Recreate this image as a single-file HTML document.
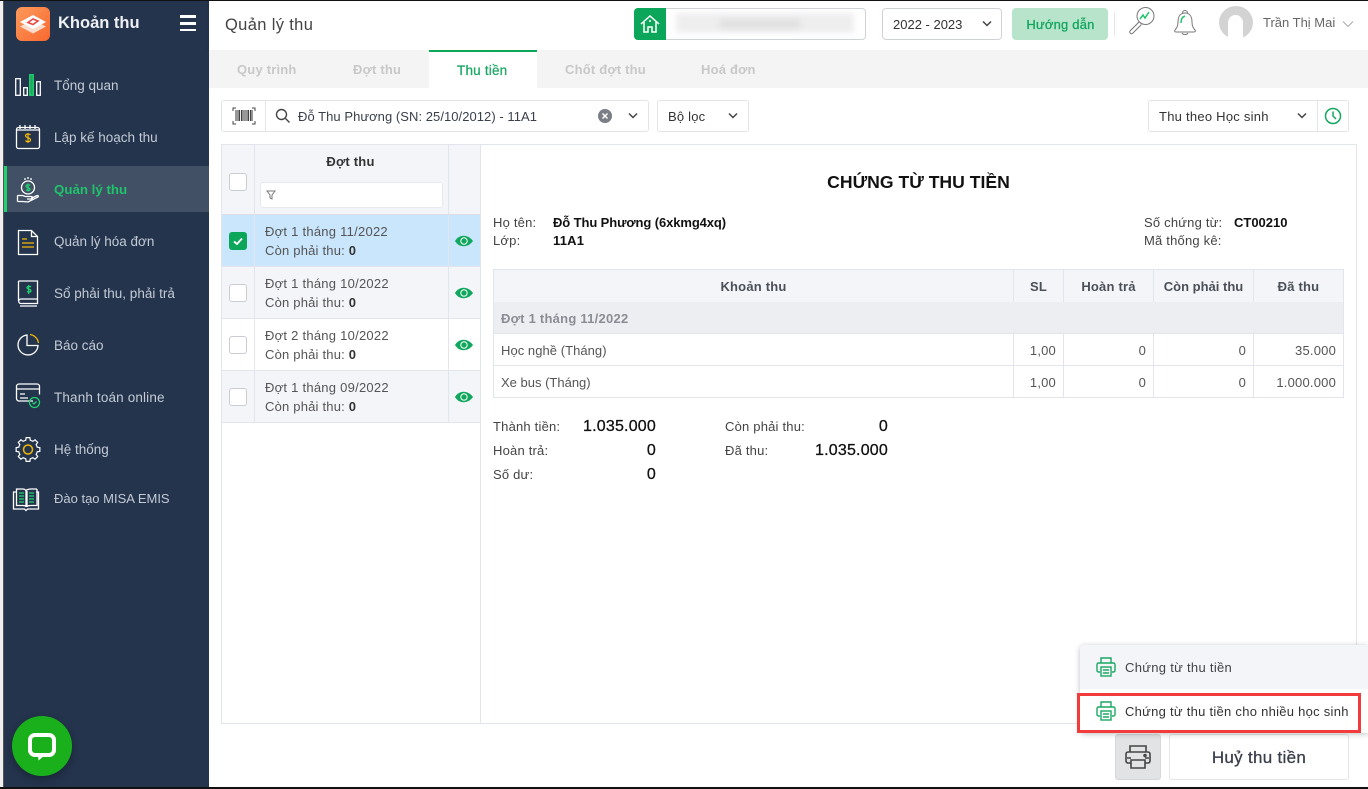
<!DOCTYPE html>
<html><head><meta charset="utf-8"><style>
*{box-sizing:border-box}
html,body{margin:0;padding:0;width:1368px;height:789px;overflow:hidden;background:#fff}
body{position:relative;font-family:"Liberation Sans","Noto Sans CJK SC",sans-serif;font-size:13px;color:#3a3f4b}
div,svg,span.a{position:absolute}
.t{white-space:nowrap;line-height:18px;height:18px;letter-spacing:.2px;margin-top:1px}
.z{margin-top:0}
.r{text-align:right}
.c{text-align:center}
.n{color:#c3cad4;font-size:13.5px;letter-spacing:0}
.b{font-weight:bold}
.k{color:#111}
.box{border:1px solid #e2e4ea;border-radius:3px;background:#fff}
.tb{color:#c8c8c8;font-weight:bold;font-size:13px}
.cb{width:18px;height:18px;border:1px solid #c9ccd3;border-radius:3px;background:#fff}
.l{background:#e3e5ee}
svg{overflow:visible}
</style></head><body>
<div style="left:0;top:0;width:3px;height:789px;background:#efefef"></div>
<div style="left:3px;top:0;width:1px;height:789px;background:#555"></div>
<div style="left:4px;top:0;width:205px;height:789px;background:#24344d"></div>
<div style="left:4px;top:166px;width:205px;height:46px;background:#425066"></div>
<div style="left:4px;top:166px;width:3px;height:46px;background:#1fd06c"></div>

<!-- logo -->
<div style="left:16px;top:7px;width:34px;height:34px;border-radius:6px;background:linear-gradient(135deg,#fd9a5c,#f8682f)"></div>
<svg style="left:16px;top:7px" width="34" height="34"><path d="M17 13l13 6.500-13 7-13-7z" fill="#f9dccb"/><path d="M17 8l13 7-13 7-13-7z" fill="#fff"/><path d="M12 15.500l5-3.500 5 2-5 3.500z" fill="none" stroke="#e8473f" stroke-width="1.600"/></svg>
<div class="t b z" style="left:58px;top:14px;color:#eef0f3;font-size:16.5px;letter-spacing:0">Khoản thu</div>
<div style="left:180px;top:15px;width:16px;height:2.500px;background:#fff"></div>
<div style="left:180px;top:22px;width:16px;height:2.500px;background:#fff"></div>
<div style="left:180px;top:28.500px;width:16px;height:2.500px;background:#fff"></div>

<!-- nav -->
<div class="t n" style="left:54px;top:76px">Tổng quan</div>
<div class="t n" style="left:54px;top:128px">Lập kế hoạch thu</div>
<div class="t b" style="left:54px;top:180px;color:#1fc46a;font-size:13.3px;letter-spacing:0">Quản lý thu</div>
<div class="t n" style="left:54px;top:232px">Quản lý hóa đơn</div>
<div class="t n" style="left:54px;top:284px">Sổ phải thu, phải trả</div>
<div class="t n" style="left:54px;top:336px">Báo cáo</div>
<div class="t n" style="left:54px;top:388px;letter-spacing:.15px">Thanh toán online</div>
<div class="t n" style="left:54px;top:440px">Hệ thống</div>
<div class="t n" style="left:54px;top:489px;font-size:13px">Đào tạo MISA EMIS</div>

<svg style="left:0;top:0" width="209" height="520" fill="none" stroke="#fff" stroke-width="1.300">
<rect x="15.7" y="78.7" width="4.600" height="16.600"/><rect x="23.7" y="87.700" width="3.600" height="7.600"/><rect x="29.7" y="74.700" width="3.600" height="20.600" stroke="#1fd06c" fill="#1fa85c"/><rect x="36.7" y="81.700" width="3.600" height="13.600"/>
<rect x="16.5" y="127.500" width="23" height="21" rx="2"/><path d="M20 125v4M25 125v4M30 125v4M35 125v4M17 130h22"/><path d="M30.500 135c-1-1.500-5-1.500-5 .8s5 1.600 5 4-4 2.300-5 .7M28 133v10" stroke="#f2b705" stroke-width="1.200"/>
<circle cx="28" cy="187.500" r="6.500"/><path d="M30 185.500c-1-1-4-1-4 .7s4 1.300 4 3-3 1.600-4 .6M28 183.500v8" stroke="#1fd06c"/><path d="M28 177v2M25 178v2M31 178v2"/><path d="M17.500 195.500h5l3 1h5.500c2 0 2 2.500 0 2.500h-4M17.500 201.500v-6M17.500 201.500h5l5.500 .5 10-5c1-1 0-2-2-1l-5 2.500"/>
<path d="M18.500 230.500h13l6 6v18h-19z M31.500 230.500v6h6"/><path d="M22 239h5M22 243h12M22 247h12" stroke="#f2b705"/>
<path d="M18.500 281h19v22.500h-16.500c-3 0-3-4.500 0-4.500h16.500M18.500 281v20M20 306h17"/><path d="M31 287c-1-1-4-1-4 .7s4 1.300 4 3-3 1.600-4 .6M28.700 285v9" stroke="#1fd06c"/>
<path d="M27 335a10 10 0 1 0 11 10.500h-11z"/><path d="M30 334.500a10 10 0 0 1 8.500 8.500" stroke="#f2b705"/>
<path d="M33 401h-14a2.500 2.500 0 0 1-2.500-2.500v-12a2.500 2.500 0 0 1 2.500-2.500h18a2.500 2.500 0 0 1 2.500 2.500v8M17 389h22M20 394h5M20 398h8"/><circle cx="34.500" cy="402.500" r="5" stroke="#1fd06c"/><path d="M32.500 402.500l1.500 1.500 2.500-2.500" stroke="#1fd06c"/>
<g transform="translate(28 449.500)" stroke-width="1.200">
<path d="M-3.640-8.780L-2.300-9.220L-1.880-11.850H1.880L2.300-9.220L3.640-8.780"/>
<path transform="rotate(45)" d="M-3.640-8.780L-2.300-9.220L-1.880-11.850H1.880L2.300-9.220L3.640-8.780"/>
<path transform="rotate(90)" d="M-3.640-8.780L-2.300-9.220L-1.880-11.850H1.880L2.300-9.220L3.640-8.780"/>
<path transform="rotate(135)" d="M-3.640-8.780L-2.300-9.220L-1.880-11.850H1.880L2.300-9.220L3.640-8.780"/>
<path transform="rotate(180)" d="M-3.640-8.780L-2.300-9.220L-1.880-11.850H1.880L2.300-9.220L3.640-8.780"/>
<path transform="rotate(225)" d="M-3.640-8.780L-2.300-9.220L-1.880-11.850H1.880L2.300-9.220L3.640-8.780"/>
<path transform="rotate(270)" d="M-3.640-8.780L-2.300-9.220L-1.880-11.850H1.880L2.300-9.220L3.640-8.780"/>
<path transform="rotate(315)" d="M-3.640-8.780L-2.300-9.220L-1.880-11.850H1.880L2.300-9.220L3.640-8.780"/>
<circle r="4.500" stroke="#f2b705" stroke-width="1.500"/></g>
<path d="M16 492h-2.500v17h11l1.500 1.500 1.500-1.500h11v-17H36M16.500 489h6c1.800 0 3.500.8 3.500 2v16c0-1-1.700-1.500-3.500-1.500h-6zM37 489h-6c-1.800 0-5 .8-5 2M27 491v16c0-1 2-1.500 4-1.500h6V489"/><path d="M19 493h5M19 496h5M19 499h5M19 502h5M29 493h5M29 496h5M29 499h5M29 502h5" stroke="#1fd06c"/>
</svg>

<!-- chat -->
<div style="left:12px;top:716px;width:60px;height:60px;border-radius:50%;background:#1ab01c;box-shadow:0 3px 8px rgba(0,0,0,.3)"></div>
<svg style="left:12px;top:716px" width="60" height="60"><path d="M23 19h14a5 5 0 0 1 5 5v10a5 5 0 0 1-5 5H23a5 5 0 0 1-5-5V24a5 5 0 0 1 5-5z" fill="none" stroke="#fff" stroke-width="4"/><path d="M26 39h7l-6.500 5.500z" fill="#fff"/></svg>

<!-- header -->
<div style="left:209px;top:0;width:1159px;height:50px;background:#fff;box-shadow:0 1px 3px rgba(0,0,0,.1)"></div>
<div style="left:0;top:0;width:1368px;height:1px;background:#111"></div>
<div class="t" style="left:225px;top:15px;font-size:16.500px;color:#444;letter-spacing:.35px">Quản lý thu</div>
<div style="left:634px;top:8px;width:232px;height:32px;border:1px solid #cfd2d6;border-radius:4px;background:#fff"></div>
<div style="left:634px;top:8px;width:32px;height:32px;background:#0ca65a;border-radius:4px 0 0 4px"></div>
<svg style="left:634px;top:8px" width="32" height="32" fill="none" stroke="#fff" stroke-width="1.500"><path d="M7 16l9-8 9 8M10 14v10h4v-5h4v5h4V14"/><path d="M15 13h2"/></svg>
<div style="left:676px;top:13px;width:178px;height:20px;background:#eeeeee;filter:blur(3px)"></div>
<div style="left:720px;top:20px;width:80px;height:8px;background:#dfdfdf;filter:blur(3px)"></div>
<div style="left:882px;top:8px;width:120px;height:32px;border:1px solid #cfd2d6;border-radius:4px"></div>
<div class="t" style="left:893px;top:15px;color:#333;letter-spacing:0">2022 - 2023</div>
<svg style="left:981px;top:20px" width="12" height="8" fill="none" stroke="#444" stroke-width="1.500"><path d="M2 1.500l4 4 4-4"/></svg>
<div style="left:1012px;top:8px;width:96px;height:32px;background:#b8e4cb;border-radius:4px"></div>
<div class="t b c" style="top:15px;width:83px;left:1019px;color:#12a75f;font-weight:normal;-webkit-text-stroke:.3px #12a75f">Hướng dẫn</div>
<div style="left:1114px;top:12px;width:1px;height:24px;background:#e5e5e5"></div>
<svg style="left:1120px;top:0" width="130" height="50" fill="none" stroke="#777" stroke-width="1"><circle cx="25.500" cy="16" r="8.500"/><path d="M19 22l-9 9c-1 1.500 1 3.500 2.500 2.500l9-9"/><path d="M20 19l3-4 2 3 4-6" stroke="#1fc46a" stroke-width="1.500"/><path d="M65 13c-5 0-7 4-7 9 0 4-1 6-3 8-1 1 0 2 1 2h18c1 0 2-1 1-2-2-2-3-4-3-8 0-5-2-9-7-9zM62.500 13a2.500 2.500 0 0 1 5 0M62 33c1 2 5 2 6 0"/><path d="M61 23c0-4 1-6 4-7" stroke="#1fc46a" stroke-width="1.500"/></svg>
<div style="left:1219px;top:6px;width:34px;height:33px;border-radius:50%;background:#d3d3d3"></div>
<div style="left:1228px;top:15px;width:15px;height:25px;border-radius:8px 8px 0 0;background:#fff"></div>
<div class="t z" style="left:1263px;top:14px;color:#666;font-size:13px;letter-spacing:0">Trần Thị Mai</div>
<svg style="left:1342px;top:20px" width="12" height="8" fill="none" stroke="#aaa"><path d="M1 1.500l5 5 5-5"/></svg>

<!-- tabs -->
<div style="left:209px;top:50px;width:1159px;height:38px;background:#f4f4f4"></div>
<div style="left:429px;top:50px;width:108px;height:38px;background:#fff;border-top:2px solid #0ca65a"></div>
<div class="t tb z" style="left:237px;top:61px">Quy trình</div>
<div class="t tb z" style="left:353px;top:61px">Đợt thu</div>
<div class="t" style="left:457px;top:61px;color:#1aa863;-webkit-text-stroke:.25px #1aa863;font-size:13.500px">Thu tiền</div>
<div class="t tb z" style="left:565px;top:61px">Chốt đợt thu</div>
<div class="t tb z" style="left:701px;top:61px">Hoá đơn</div>

<!-- filter -->
<div class="box" style="left:221px;top:100px;width:428px;height:32px"></div>
<div class="l" style="left:265px;top:101px;width:1px;height:30px"></div>
<svg style="left:232px;top:107px" width="24" height="18" fill="none" stroke="#444"><path d="M1 4V1h3M20 1h3v3M1 14v3h3M20 17h3v-3"/><path d="M4 3v11M6 3v11M7.500 3v11M9.500 3v11M11 3v11M13 3v11M15 3v11M16.500 3v11M18.500 3v11M20 3v11" stroke-width="1.100"/></svg>
<svg style="left:275px;top:108px" width="16" height="16" fill="none" stroke="#444" stroke-width="1.400"><circle cx="6.500" cy="6.500" r="5"/><path d="M10.500 10.500l4 4"/></svg>
<div class="t" style="left:298px;top:107px;color:#3a3f4b;letter-spacing:.05px">Đỗ Thu Phương (SN: 25/10/2012) - 11A1</div>
<div style="left:598px;top:109px;width:14px;height:14px;border-radius:50%;background:#7a7e86"></div>
<svg style="left:598px;top:109px" width="14" height="14" stroke="#fff" stroke-width="1.500"><path d="M4.500 4.500l5 5M9.500 4.500l-5 5"/></svg>
<svg style="left:627px;top:112px" width="12" height="8" fill="none" stroke="#444" stroke-width="1.500"><path d="M2 1.500l4 4 4-4"/></svg>
<div class="box" style="left:657px;top:100px;width:92px;height:32px"></div>
<div class="t" style="left:668px;top:107px;color:#333">Bộ lọc</div>
<svg style="left:727px;top:112px" width="12" height="8" fill="none" stroke="#444" stroke-width="1.500"><path d="M2 1.500l4 4 4-4"/></svg>
<div class="box" style="left:1148px;top:100px;width:201px;height:32px"></div>
<div class="l" style="left:1317px;top:101px;width:1px;height:30px"></div>
<div class="t" style="left:1159px;top:107px;color:#333;letter-spacing:.25px">Thu theo Học sinh</div>
<svg style="left:1296px;top:112px" width="12" height="8" fill="none" stroke="#444" stroke-width="1.500"><path d="M2 1.500l4 4 4-4"/></svg>
<svg style="left:1324px;top:107px" width="18" height="18" fill="none" stroke="#12a75f" stroke-width="1.500"><circle cx="9" cy="9" r="7.500"/><path d="M9 4.500V9l3 3"/></svg>

<!-- main panel -->
<div style="left:221px;top:144px;width:1136px;height:580px;border:1px solid #e3e5ee;background:#fff"></div>
<div style="left:222px;top:145px;width:258px;height:69px;background:#f4f5f9"></div>
<div style="left:222px;top:214px;width:258px;height:1px;background:#dcdee6"></div>
<div class="l" style="left:480px;top:145px;width:1px;height:578px"></div>
<div class="cb" style="left:229px;top:173px"></div>
<div class="t b c" style="left:254px;top:152px;width:193px;color:#333">Đợt thu</div>
<div style="left:260px;top:182px;width:183px;height:26px;background:#fff;border:1px solid #e8e9ee;border-radius:3px"></div>
<svg style="left:266px;top:190px" width="10" height="10" fill="none" stroke="#777"><path d="M1 1h8L6 5v4L4 8V5z"/></svg>

<!-- rows -->
<div style="left:222px;top:215px;width:258px;height:52px;background:#c9e6fc"></div>
<div style="left:222px;top:267px;width:258px;height:52px;background:#f4f5f9"></div>
<div style="left:222px;top:371px;width:258px;height:52px;background:#f4f5f9"></div>
<div class="l" style="left:222px;top:266px;width:258px;height:1px"></div>
<div class="l" style="left:222px;top:318px;width:258px;height:1px"></div>
<div class="l" style="left:222px;top:370px;width:258px;height:1px"></div>
<div class="l" style="left:222px;top:422px;width:258px;height:1px"></div>
<div class="l" style="left:254px;top:145px;width:1px;height:278px"></div>
<div class="l" style="left:448px;top:145px;width:1px;height:278px"></div>

<div style="left:229px;top:232px;width:18px;height:18px;border-radius:3px;background:#0ca65a"></div>
<svg style="left:229px;top:232px" width="18" height="18" fill="none" stroke="#fff" stroke-width="1.800"><path d="M5 9.500l3 2.500 5-5.500"/></svg>
<div class="cb" style="left:229px;top:284px"></div>
<div class="cb" style="left:229px;top:336px"></div>
<div class="cb" style="left:229px;top:388px"></div>

<div class="t" style="left:265px;top:222px;color:#555;letter-spacing:.25px">Đợt 1 tháng 11/2022</div>
<div class="t" style="left:265px;top:241px;color:#555">Còn phải thu: <b style="color:#333">0</b></div>
<div class="t" style="left:265px;top:274px;color:#555;letter-spacing:.25px">Đợt 1 tháng 10/2022</div>
<div class="t" style="left:265px;top:293px;color:#555">Còn phải thu: <b style="color:#333">0</b></div>
<div class="t" style="left:265px;top:326px;color:#555;letter-spacing:.25px">Đợt 2 tháng 10/2022</div>
<div class="t" style="left:265px;top:345px;color:#555">Còn phải thu: <b style="color:#333">0</b></div>
<div class="t" style="left:265px;top:378px;color:#555;letter-spacing:.25px">Đợt 1 tháng 09/2022</div>
<div class="t" style="left:265px;top:397px;color:#555">Còn phải thu: <b style="color:#333">0</b></div>

<svg style="left:455px;top:235px" width="18" height="12"><path d="M0 6c4-7 13-7 18 0-5 7-14 7-18 0z" fill="#12a75f"/><circle cx="9" cy="6" r="3.200" fill="none" stroke="#fff"/></svg>
<svg style="left:455px;top:287px" width="18" height="12"><path d="M0 6c4-7 13-7 18 0-5 7-14 7-18 0z" fill="#12a75f"/><circle cx="9" cy="6" r="3.200" fill="none" stroke="#fff"/></svg>
<svg style="left:455px;top:339px" width="18" height="12"><path d="M0 6c4-7 13-7 18 0-5 7-14 7-18 0z" fill="#12a75f"/><circle cx="9" cy="6" r="3.200" fill="none" stroke="#fff"/></svg>
<svg style="left:455px;top:391px" width="18" height="12"><path d="M0 6c4-7 13-7 18 0-5 7-14 7-18 0z" fill="#12a75f"/><circle cx="9" cy="6" r="3.200" fill="none" stroke="#fff"/></svg>

<!-- doc -->
<div class="t b c k z" style="left:481px;top:172px;width:875px;font-size:17.600px;line-height:20px;height:20px;letter-spacing:0">CHỨNG TỪ THU TIỀN</div>
<div class="t z" style="left:493px;top:214px;color:#444">Họ tên:</div>
<div class="t b k z" style="left:553px;top:214px;letter-spacing:-.1px">Đỗ Thu Phương (6xkmg4xq)</div>
<div class="t z" style="left:493px;top:232px;color:#444">Lớp:</div>
<div class="t b k z" style="left:553px;top:232px">11A1</div>
<div class="t z" style="left:1144px;top:214px;color:#444">Số chứng từ:</div>
<div class="t b k z" style="left:1234px;top:214px;letter-spacing:0">CT00210</div>
<div class="t z" style="left:1144px;top:232px;color:#444">Mã thống kê:</div>

<!-- table -->
<div style="left:493px;top:269px;width:851px;height:129px;border:1px solid #e3e5ee"></div>
<div style="left:494px;top:270px;width:849px;height:32px;background:#f4f5f9"></div>
<div style="left:494px;top:302px;width:849px;height:31px;background:#eceef2"></div>
<div class="l" style="left:494px;top:333px;width:849px;height:1px"></div>
<div class="l" style="left:494px;top:365px;width:849px;height:1px"></div>
<div class="l" style="left:1013px;top:270px;width:1px;height:32px"></div>
<div class="l" style="left:1063px;top:270px;width:1px;height:32px"></div>
<div class="l" style="left:1153px;top:270px;width:1px;height:32px"></div>
<div class="l" style="left:1253px;top:270px;width:1px;height:32px"></div>
<div class="l" style="left:1013px;top:334px;width:1px;height:63px"></div>
<div class="l" style="left:1063px;top:334px;width:1px;height:63px"></div>
<div class="l" style="left:1153px;top:334px;width:1px;height:63px"></div>
<div class="l" style="left:1253px;top:334px;width:1px;height:63px"></div>
<div class="t b c" style="left:494px;top:277px;width:519px;color:#4b4f58">Khoản thu</div>
<div class="t b c" style="left:1014px;top:277px;width:49px;color:#4b4f58">SL</div>
<div class="t b c" style="left:1064px;top:277px;width:89px;color:#4b4f58">Hoàn trả</div>
<div class="t b c" style="left:1154px;top:277px;width:99px;color:#4b4f58;letter-spacing:0">Còn phải thu</div>
<div class="t b c" style="left:1254px;top:277px;width:89px;color:#4b4f58">Đã thu</div>
<div class="t b" style="left:501px;top:309px;color:#8a8d93;letter-spacing:.25px">Đợt 1 tháng 11/2022</div>
<div class="t" style="left:501px;top:341px;color:#555;letter-spacing:.05px">Học nghề (Tháng)</div>
<div class="t" style="left:501px;top:373px;color:#555;letter-spacing:0">Xe bus (Tháng)</div>
<div class="t r" style="left:1000px;width:56px;top:341px;color:#555">1,00</div>
<div class="t r" style="left:1000px;width:56px;top:373px;color:#555">1,00</div>
<div class="t r" style="left:1100px;width:46px;top:341px;color:#555">0</div>
<div class="t r" style="left:1100px;width:46px;top:373px;color:#555">0</div>
<div class="t r" style="left:1200px;width:46px;top:341px;color:#555">0</div>
<div class="t r" style="left:1200px;width:46px;top:373px;color:#555">0</div>
<div class="t r" style="left:1256px;width:80px;top:341px;color:#555">35.000</div>
<div class="t r" style="left:1256px;width:80px;top:373px;color:#555">1.000.000</div>

<!-- totals -->
<div class="t" style="left:493px;top:417px;color:#444">Thành tiền:</div>
<div class="t" style="left:493px;top:441px;color:#444">Hoàn trả:</div>
<div class="t" style="left:493px;top:465px;color:#444">Số dư:</div>
<div class="t" style="left:725px;top:417px;color:#444">Còn phải thu:</div>
<div class="t" style="left:725px;top:441px;color:#444">Đã thu:</div>
<div class="t r k" style="left:556px;width:100px;top:417px;font-size:16px;-webkit-text-stroke:.3px #111">1.035.000</div>
<div class="t r k" style="left:556px;width:100px;top:441px;font-size:16px;-webkit-text-stroke:.3px #111">0</div>
<div class="t r k" style="left:556px;width:100px;top:465px;font-size:16px;-webkit-text-stroke:.3px #111">0</div>
<div class="t r k" style="left:788px;width:100px;top:417px;font-size:16px;-webkit-text-stroke:.3px #111">0</div>
<div class="t r k" style="left:788px;width:100px;top:441px;font-size:16px;-webkit-text-stroke:.3px #111">1.035.000</div>

<!-- bottom buttons -->
<div style="left:1115px;top:734px;width:46px;height:46px;background:#e2e3e5;border:1px solid #d6d7da;border-radius:3px"></div>
<svg style="left:1125px;top:745px" width="26" height="26" fill="none" stroke="#444" stroke-width="1.600"><path d="M5 7V1h16v6M6 18H3a2 2 0 0 1-2-2V9a2 2 0 0 1 2-2h20a2 2 0 0 1 2 2v7a2 2 0 0 1-2 2h-3M6 15h14v8H6zM2 13h4M20 13h4"/><circle cx="20" cy="10.500" r="1"/></svg>
<div style="left:1169px;top:734px;width:180px;height:46px;border:1px solid #e4e5e8;border-radius:3px;background:#fff"></div>
<div class="t c" style="left:1169px;top:748px;width:180px;font-size:17px;color:#3a3f4b;letter-spacing:.3px;-webkit-text-stroke:.3px #3a3f4b">Huỷ thu tiền</div>

<!-- popup -->
<div style="left:1080px;top:645px;width:288px;height:88px;background:#fff;box-shadow:0 1px 6px rgba(0,0,0,.25);border-radius:4px 0 0 4px"></div>
<div style="left:1080px;top:645px;width:288px;height:44px;background:#f4f5f9;border-radius:4px 0 0 0"></div>
<div style="left:1077px;top:693px;width:284px;height:40px;border:3px solid #f23b3b"></div>
<svg style="left:1096px;top:656px" width="20" height="22" fill="none" stroke="#1aa863" stroke-width="1.400"><path d="M5 7V2h10v5M4 16H2.500A1.500 1.500 0 0 1 1 14.500v-6A1.500 1.500 0 0 1 2.500 7h15A1.500 1.500 0 0 1 19 8.500v6a1.500 1.500 0 0 1-1.500 1.500H16"/><rect x="5" y="11" width="10" height="9"/><path d="M7 14h6M7 17h6"/></svg>
<svg style="left:1096px;top:700px" width="20" height="22" fill="none" stroke="#1aa863" stroke-width="1.400"><path d="M5 7V2h10v5M4 16H2.500A1.500 1.500 0 0 1 1 14.500v-6A1.500 1.500 0 0 1 2.500 7h15A1.500 1.500 0 0 1 19 8.500v6a1.500 1.500 0 0 1-1.500 1.500H16"/><rect x="5" y="11" width="10" height="9"/><path d="M7 14h6M7 17h6"/></svg>
<div class="t" style="left:1125px;top:658px;color:#444;letter-spacing:.3px">Chứng từ thu tiền</div>
<div class="t" style="left:1125px;top:702px;color:#333;letter-spacing:.27px">Chứng từ thu tiền cho nhiều học sinh</div>

<div style="left:0;top:787px;width:1368px;height:2px;background:#111"></div>
</body></html>
